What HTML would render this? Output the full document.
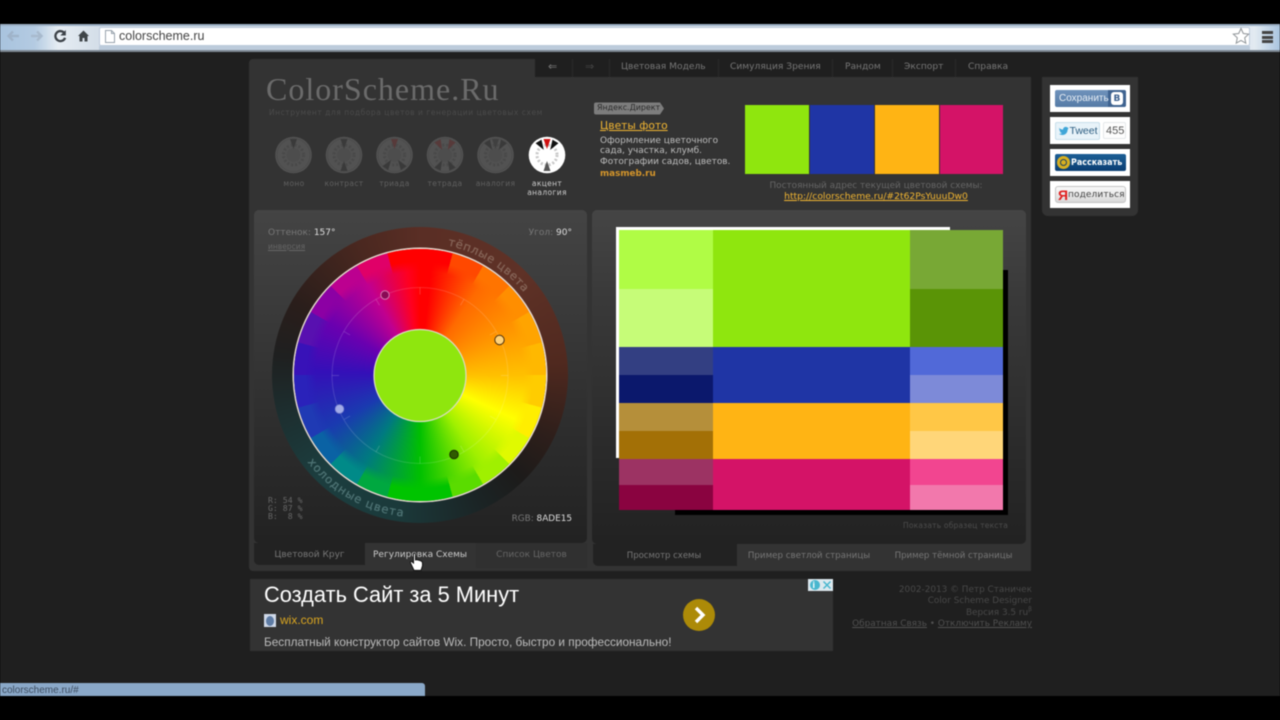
<!DOCTYPE html>
<html lang="ru">
<head>
<meta charset="utf-8">
<title>ColorScheme.Ru</title>
<style>
html,body{margin:0;padding:0;width:1280px;height:720px;overflow:hidden;background:#000}
#root{position:relative;width:1280px;height:720px;overflow:hidden;background:#000;font-family:"DejaVu Sans","Liberation Sans",sans-serif;filter:blur(.4px)}
.a,.t{position:absolute}
.t{white-space:nowrap;line-height:12px}
.c{transform:translateX(-50%);text-align:center}
.r{text-align:right}
.w{border-radius:50%}
</style>
</head>
<body>
<div id="root">
<!-- page bg -->
<div class="a" style="left:0;top:52px;width:1280px;height:644px;background:#1f1f1f"></div>

<!-- browser toolbar -->
<div class="a" style="left:0;top:24px;width:1280px;height:28px;background:linear-gradient(90deg,#a8c3de 0,#b4cbe2 35px,#e6edf3 58px,#d5dfe9 95px,#ccd8e4 400px,#d8e0e8 700px,#cad8e6 1100px,#e2eaf1 1255px,#a9c4df 1280px)"></div>
<div class="a" style="left:0;top:24px;width:1280px;height:2px;background:#9cb0c4"></div>
<div class="a" style="left:0;top:50px;width:1280px;height:2px;background:#7d8893"></div>
<div class="a" style="left:99px;top:27px;width:1151px;height:19px;background:#fff;border:1px solid #bccadb;border-radius:2px;box-sizing:border-box"></div>
<div class="a" style="left:99px;top:46px;width:1151px;height:4px;background:#bccbdb"></div>
<svg class="a" style="left:0;top:24px" width="100" height="28" viewBox="0 24 100 28">
<path d="M19 36H8.500M13 31.500 8.500 36l4.500 4.500" fill="none" stroke="#9fb3c9" stroke-width="2.400"/>
<path d="M31 36h10.500M37 31.500l4.500 4.500-4.500 4.500" fill="none" stroke="#a8bacd" stroke-width="2.400"/>
<path d="M64.500 33.200a5 5 0 1 0 .6 4.600" fill="none" stroke="#3c4248" stroke-width="2.300"/>
<path d="M65.800 30v5.500h-5.500z" fill="#3c4248"/>
<path d="M83.500 30.500 78 36h1.500v5.500h3v-3.500h2v3.500h3V36H89z" fill="#3f4549"/>
</svg>
<svg class="a" style="left:104px;top:29px" width="12" height="15" viewBox="0 0 12 15"><path d="M1.500 1.500h6l3 3v9h-9zM7.500 1.500v3h3" fill="#fff" stroke="#98a2ac"/></svg>
<div class="t" style="left:119px;top:29px;font:12.500px/14px 'Liberation Sans',sans-serif;color:#444">colorscheme.ru</div>
<svg class="a" style="left:1232px;top:27px" width="18" height="18" viewBox="0 0 18 18"><path d="M9 1.500l2.300 5 5.400.6-4 3.700 1.100 5.400L9 13.500l-4.800 2.700 1.100-5.400-4-3.700 5.400-.6z" fill="#fff" stroke="#8f9498"/></svg>
<div class="a" style="left:1262px;top:31px;width:11px;height:3px;background:#444"></div>
<div class="a" style="left:1262px;top:35.500px;width:11px;height:3px;background:#444"></div>
<div class="a" style="left:1262px;top:40px;width:11px;height:3px;background:#444"></div>

<!-- main panel -->
<div class="a" style="left:249px;top:59px;width:286px;height:40px;background:#333;border-radius:4px 0 0 0"></div>
<div class="a" style="left:249px;top:77px;width:782px;height:494px;background:#333;border-radius:0 0 4px 4px"></div>

<!-- nav -->
<div class="t" style="left:548px;top:61px;font-size:11px;color:#777">⇐</div>
<div class="t" style="left:585px;top:61px;font-size:11px;color:#444">⇒</div>
<div class="a" style="left:572px;top:59px;width:1px;height:18px;background:#2a2a2a"></div>
<div class="a" style="left:609px;top:59px;width:1px;height:18px;background:#2a2a2a"></div>
<div class="a" style="left:718px;top:59px;width:1px;height:18px;background:#2a2a2a"></div>
<div class="a" style="left:832px;top:59px;width:1px;height:18px;background:#2a2a2a"></div>
<div class="a" style="left:892px;top:59px;width:1px;height:18px;background:#2a2a2a"></div>
<div class="a" style="left:955px;top:59px;width:1px;height:18px;background:#2a2a2a"></div>
<div class="t" style="left:621px;top:61px;font-size:9.100px;color:#777">Цветовая Модель</div>
<div class="t" style="left:730px;top:61px;font-size:9.100px;color:#777">Симуляция Зрения</div>
<div class="t" style="left:845px;top:61px;font-size:9.100px;color:#777">Рандом</div>
<div class="t" style="left:904px;top:61px;font-size:9.100px;color:#777">Экспорт</div>
<div class="t" style="left:968px;top:61px;font-size:9.100px;color:#777">Справка</div>

<!-- logo -->
<div class="t" style="left:266px;top:70px;font:32px/38px 'Liberation Serif',serif;color:#6b6b6b;letter-spacing:1px">ColorScheme.Ru</div>
<div class="t" style="left:269px;top:107px;font-size:7.500px;color:#4b4b4b;letter-spacing:.55px">Инструмент для подбора цветов и генерации цветовых схем</div>

<!-- scheme type thumbs -->
<svg class="a" style="left:270px;top:132px" width="300" height="46" viewBox="270 132 300 46">
<defs>
<g id="base">
<circle r="18.300" fill="#525252"/>
<circle r="16.500" fill="none" stroke="#4c4c4c" stroke-width="1"/>
<circle r="10" fill="none" stroke="#494949" stroke-width="3" stroke-dasharray="2 2"/>
<circle r="7" fill="#4d4d4d"/>
</g>
<polygon id="wd" points="-3.500,-16 3.500,-16 0,-6"/>
</defs>
<g transform="translate(293.500 155)"><use href="#base"/><use href="#wd" fill="#3a3a3a"/></g>
<g transform="translate(344 155)"><use href="#base"/><use href="#wd" fill="#3a3a3a"/><use href="#wd" fill="#3a3a3a" transform="rotate(180)"/></g>
<g transform="translate(394.500 155)"><use href="#base"/><use href="#wd" fill="#573a3a"/><use href="#wd" fill="#3a3a3a" transform="rotate(145)"/><use href="#wd" fill="#3a3a3a" transform="rotate(215)"/></g>
<g transform="translate(445 155)"><use href="#base"/><use href="#wd" fill="#573a3a" transform="rotate(-28)"/><use href="#wd" fill="#573a3a" transform="rotate(28)"/><use href="#wd" fill="#3a3a3a" transform="rotate(152)"/><use href="#wd" fill="#3a3a3a" transform="rotate(208)"/></g>
<g transform="translate(495.500 155)"><use href="#base"/><use href="#wd" fill="#404040"/><use href="#wd" fill="#3a3a3a" transform="rotate(-32)"/><use href="#wd" fill="#3a3a3a" transform="rotate(32)"/></g>
<g transform="translate(547 155)">
<circle r="18.300" fill="#fff"/>
<circle r="10" fill="none" stroke="#c8c8c8" stroke-width="3" stroke-dasharray="2 2"/>
<use href="#wd" fill="#d01010"/><use href="#wd" fill="#111" transform="rotate(-32)"/><use href="#wd" fill="#111" transform="rotate(32)"/><use href="#wd" fill="#555" transform="rotate(180)"/>
</g>
</svg>
<div class="t c" style="left:294px;top:178px;font-size:7.500px;color:#606060;letter-spacing:.35px">моно</div>
<div class="t c" style="left:344px;top:178px;font-size:7.500px;color:#606060;letter-spacing:.35px">контраст</div>
<div class="t c" style="left:394.500px;top:178px;font-size:7.500px;color:#606060;letter-spacing:.35px">триада</div>
<div class="t c" style="left:445px;top:178px;font-size:7.500px;color:#606060;letter-spacing:.35px">тетрада</div>
<div class="t c" style="left:495.500px;top:178px;font-size:7.500px;color:#606060;letter-spacing:.35px">аналогия</div>
<div class="t c" style="left:547px;top:179px;font-size:7.500px;color:#ccc;letter-spacing:.35px;line-height:9px">акцент<br>аналогия</div>

<!-- direct ad -->
<svg class="a" style="left:594px;top:102px" width="72" height="13" viewBox="0 0 72 13"><path d="M2 .5h64l4 6-4 6H2q-2 0-2-2V2.500q0-2 2-2z" fill="#7d7d7d"/></svg>
<div class="t" style="left:597px;top:102px;font-size:7.900px;color:#2a2a2a">Яндекс.Директ</div>
<div class="t" style="left:600px;top:120px;font-size:10.700px;color:#f2b632;text-decoration:underline">Цветы фото</div>
<div class="t" style="left:600px;top:136px;font-size:8.950px;color:#bdbdbd;line-height:10.400px">Оформление цветочного<br>сада, участка, клумб.<br>Фотографии садов, цветов.</div>
<div class="t" style="left:600px;top:168px;font-size:8.800px;font-weight:bold;color:#d6962a">masmeb.ru</div>

<!-- swatches -->
<div class="a" style="left:745px;top:105px;width:64px;height:69px;background:#8fe60e"></div>
<div class="a" style="left:810px;top:105px;width:64px;height:69px;background:#1f35a5"></div>
<div class="a" style="left:875px;top:105px;width:64px;height:69px;background:#ffb414"></div>
<div class="a" style="left:940px;top:105px;width:63px;height:69px;background:#d41367"></div>
<div class="t c" style="left:876px;top:180px;font-size:8.900px;color:#666">Постоянный адрес текущей цветовой схемы:</div>
<div class="t c" style="left:876px;top:190.500px;font-size:9.200px;color:#f2b632;text-decoration:underline">http://colorscheme.ru/#2t62PsYuuuDw0</div>

<!-- left panel -->
<div class="a" style="left:254px;top:210px;width:333px;height:333px;border-radius:5px;background:linear-gradient(180deg,#444 0,#3c3c3c 25%,#2c2c2c 70%,#222 100%)"></div>
<div class="a" style="left:254px;top:543px;width:111px;height:22px;background:#222;border-radius:0 0 0 5px"></div>
<div class="a" style="left:365px;top:543px;width:110px;height:25px;background:#333"></div>
<div class="a" style="left:476px;top:543px;width:111px;height:25px;background:#303030"></div>
<div class="t c" style="left:309.500px;top:549px;font-size:9px;color:#777">Цветовой Круг</div>
<div class="t c" style="left:420px;top:549px;font-size:9px;color:#ccc">Регулировка Схемы</div>
<div class="t c" style="left:531.500px;top:549px;font-size:9px;color:#666">Список Цветов</div>

<div class="t" style="left:268px;top:226.500px;font-size:9px;color:#777">Оттенок: <span style="color:#ddd">157°</span></div>
<div class="t" style="left:268px;top:241px;font-size:7.500px;color:#666;text-decoration:underline">инверсия</div>
<div class="t r" style="right:708px;top:226.500px;font-size:9px;color:#777">Угол: <span style="color:#ddd">90°</span></div>

<!-- wheel -->
<div class="a w" style="left:272px;top:227px;width:296px;height:296px;background:conic-gradient(#5a2e25 0deg,#5f3227 45deg,#50291f 85deg,#2e1f1b 115deg,#1d1b1a 135deg,#1b2425 155deg,#1b3a3b 190deg,#1c3e3f 225deg,#1d2e2f 255deg,#1f2020 278deg,#2a1e1b 300deg,#4a2820 335deg,#5a2e25 360deg)"></div>
<div class="a w" style="left:294px;top:249px;width:252px;height:252px;box-shadow:0 0 0 1.500px #e9dcd2;background:conic-gradient(#ff0000 0 15deg,#ff4800 15deg 30deg,#ff7400 30deg 45deg,#ff8e00 45deg 60deg,#ffa400 60deg 75deg,#ffb800 75deg 90deg,#ffcc00 90deg 105deg,#ffee00 105deg 120deg,#e0fa00 120deg 135deg,#a0f000 135deg 150deg,#5adc00 150deg 165deg,#00c400 165deg 195deg,#00a840 195deg 210deg,#008a88 210deg 225deg,#0a62a4 225deg 240deg,#1f3ab4 240deg 255deg,#2a22ba 255deg 270deg,#3812b8 270deg 285deg,#5810b0 285deg 300deg,#8c00a4 300deg 315deg,#bc0090 315deg 330deg,#e00068 330deg 345deg,#ff0000 345deg 360deg)"></div>
<div class="a w" style="left:294px;top:249px;width:252px;height:252px;-webkit-mask:radial-gradient(circle,#000 104px,transparent 114px);mask:radial-gradient(circle,#000 104px,transparent 114px);background:conic-gradient(#ff0000 0deg,#ff0000 6deg,#ff6a00 34deg,#ff9000 60deg,#ffc000 90deg,#ffff00 115deg,#a0f000 145deg,#00c000 180deg,#007a80 212deg,#1a3ab0 240deg,#3410b8 272deg,#6a00b0 300deg,#c00090 330deg,#ff0020 353deg,#ff0000 360deg)"></div>
<svg class="a" style="left:270px;top:225px" width="300" height="300" viewBox="270 225 300 300">
<circle cx="420" cy="375.500" r="88" fill="none" stroke="rgba(255,255,255,.14)"/>
<g stroke="rgba(255,255,255,.16)" stroke-width="1">
<path d="M332 375.500h7M501 375.500h7M420 287.500v7M420 456.500v7"/>
<path d="M344 331.500l6 3.500M496 331.500l-6 3.500M344 419.500l6-3.500M496 419.500l-6-3.500"/>
<path d="M376 299.300l3.500 6M464 299.300l-3.500 6M376 451.700l3.500-6M464 451.700l-3.500-6"/>
</g>
<path id="warm" d="M420 242.500A133 133 0 0 1 553 375.500" fill="none"/>
<path id="cold" d="M278 375.500A142 142 0 0 0 420 517.500A142 142 0 0 0 500 492" fill="none"/>
<text font-family="DejaVu Sans,sans-serif" font-size="11.500" fill="#866558" stroke="#866558" stroke-width=".25"><textPath href="#warm" startOffset="28" textLength="91">тёплые цвета</textPath></text>
<text font-family="DejaVu Sans,sans-serif" font-size="11.500" fill="#4f7475" stroke="#4f7475" stroke-width=".25"><textPath href="#cold" startOffset="93" textLength="113">холодные цвета</textPath></text>
<circle cx="420" cy="375.500" r="46" fill="#8fe60e" stroke="#dcdcc8" stroke-width="1.200"/>
<circle cx="385" cy="295" r="4.200" fill="#8a0a55" stroke="#d87ab0" stroke-width="1"/>
<circle cx="499.500" cy="340" r="4.700" fill="#ffd27a" stroke="#4a3010" stroke-width="1"/>
<circle cx="339.500" cy="409" r="4.300" fill="#a3ace8" stroke="#7c86d0" stroke-width=".8"/>
<circle cx="454" cy="454.500" r="4.300" fill="#2f5c00" stroke="#1a3000" stroke-width="1"/>
</svg>
<div class="t" style="left:268px;top:496px;font:8.200px/8px 'DejaVu Sans Mono','Liberation Mono',monospace;color:#666;white-space:pre">R: 54 %
G: 87 %
B:  8 %</div>
<div class="t r" style="right:708px;top:513px;font-size:8.900px;color:#777">RGB: <span style="color:#ddd">8ADE15</span></div>

<!-- right panel -->
<div class="a" style="left:592px;top:210px;width:434px;height:334px;border-radius:5px;background:linear-gradient(180deg,#454545 0,#3a3a3a 25%,#2b2b2b 70%,#222 100%)"></div>
<div class="a" style="left:593px;top:544px;width:144px;height:22px;background:#222;border-radius:0 0 0 5px"></div>
<div class="a" style="left:737px;top:544px;width:144px;height:27px;background:#333"></div>
<div class="a" style="left:882px;top:544px;width:149px;height:27px;background:#333"></div>
<div class="t c" style="left:664px;top:550px;font-size:8.500px;color:#777">Просмотр схемы</div>
<div class="t c" style="left:809px;top:549.500px;font-size:8.700px;color:#777">Пример светлой страницы</div>
<div class="t c" style="left:953.500px;top:549.500px;font-size:8.600px;color:#777">Пример тёмной страницы</div>
<div class="t r" style="right:272px;top:520px;font-size:7.500px;color:#4d4d4d;letter-spacing:.2px">Показать образец текста</div>

<!-- preview -->
<div class="a" style="left:616px;top:227px;width:334px;height:231px;background:#fff"></div>
<div class="a" style="left:675px;top:270px;width:333px;height:245px;background:#000"></div>
<div class="a" style="left:619px;top:230px;width:94px;height:59px;background:#b0fc45"></div>
<div class="a" style="left:619px;top:289px;width:94px;height:58px;background:#c6fc78"></div>
<div class="a" style="left:713px;top:230px;width:197px;height:117px;background:#8fe60e"></div>
<div class="a" style="left:910px;top:230px;width:93px;height:59px;background:#78a835"></div>
<div class="a" style="left:910px;top:289px;width:93px;height:58px;background:#5a9406"></div>
<div class="a" style="left:619px;top:347px;width:94px;height:28px;background:#333f82"></div>
<div class="a" style="left:619px;top:375px;width:94px;height:28px;background:#0b186c"></div>
<div class="a" style="left:713px;top:347px;width:197px;height:56px;background:#1f35a5"></div>
<div class="a" style="left:910px;top:347px;width:93px;height:28px;background:#5169d8"></div>
<div class="a" style="left:910px;top:375px;width:93px;height:28px;background:#7d8ad8"></div>
<div class="a" style="left:619px;top:403px;width:94px;height:28px;background:#b58f3a"></div>
<div class="a" style="left:619px;top:431px;width:94px;height:28px;background:#a37006"></div>
<div class="a" style="left:713px;top:403px;width:197px;height:56px;background:#ffb414"></div>
<div class="a" style="left:910px;top:403px;width:93px;height:28px;background:#ffc746"></div>
<div class="a" style="left:910px;top:431px;width:93px;height:28px;background:#ffd679"></div>
<div class="a" style="left:619px;top:459px;width:94px;height:26px;background:#9c3363"></div>
<div class="a" style="left:619px;top:485px;width:94px;height:25px;background:#8a0340"></div>
<div class="a" style="left:713px;top:459px;width:197px;height:51px;background:#d41367"></div>
<div class="a" style="left:910px;top:459px;width:93px;height:26px;background:#f24590"></div>
<div class="a" style="left:910px;top:485px;width:93px;height:25px;background:#f278ac"></div>

<!-- side panel -->
<div class="a" style="left:1042px;top:77px;width:96px;height:139px;background:#333;border-radius:0 0 6px 6px"></div>
<div class="a" style="left:1050px;top:85px;width:80px;height:27px;background:#fff"></div>
<div class="a" style="left:1050px;top:117px;width:80px;height:27px;background:#fff"></div>
<div class="a" style="left:1050px;top:149px;width:80px;height:27px;background:#fff"></div>
<div class="a" style="left:1050px;top:181px;width:80px;height:27px;background:#fff"></div>
<!-- vk -->
<div class="a" style="left:1055px;top:90px;width:71px;height:17px;background:linear-gradient(#6f92bb,#557ba6);border-radius:2px"></div>
<div class="a" style="left:1108px;top:90px;width:18px;height:17px;background:#3f6390;border-radius:0 2px 2px 0"></div>
<div class="a" style="left:1111px;top:92px;width:12px;height:13px;background:#fff;border-radius:3px"></div>
<div class="t" style="left:1059px;top:92.500px;font:10px/12px 'Liberation Sans',sans-serif;color:#e8eef5">Сохранить</div>
<div class="t" style="left:1113.500px;top:92.500px;font-size:9px;font-weight:bold;color:#3f6390">В</div>
<!-- tweet -->
<div class="a" style="left:1055px;top:122px;width:43px;height:16px;background:#e8f3f9;border:1px solid #c8dfea;border-radius:2px"></div>
<svg class="a" style="left:1058px;top:125px" width="11" height="11" viewBox="0 0 12 12"><path d="M1 3c1.500 1.500 3 2 4.500 2 0-2 1.500-3 3-3 .8 0 1.200.3 1.700.7L11.500 3l-.8 1 .8-.1-1 1c0 3-2 6-5.500 6-1.500 0-3-.5-4-1.200 1.500 0 2.500-.4 3.300-1C3 8.500 2.200 8 2 7h1C2 6.500 1.300 5.500 1.300 4.500l1 .3C1.500 4.300 1 3.500 1 3z" fill="#3fa6d8"/></svg>
<div class="t" style="left:1069.500px;top:124.500px;font:10.500px/12px 'Liberation Sans',sans-serif;color:#2b5c80">Tweet</div>
<div class="a" style="left:1103px;top:122px;width:23px;height:17px;background:#fdfdfd;border:1px solid #e4e8ea;box-sizing:border-box;border-radius:2px"></div>
<div class="t" style="left:1106px;top:124.500px;font:11px/12px 'Liberation Sans',sans-serif;color:#555">455</div>
<!-- mail -->
<div class="a" style="left:1055px;top:154px;width:71px;height:17px;background:linear-gradient(#1c5e96,#0b3e72);border-radius:2px"></div>
<div class="a w" style="left:1057px;top:155.500px;width:13px;height:13px;background:#d8b020"></div>
<div class="a w" style="left:1060px;top:158.500px;width:5px;height:5px;border:1px solid #1c4060"></div>
<div class="t" style="left:1071px;top:156.500px;font-size:8.500px;font-weight:bold;color:#fff;transform-origin:0 50%;transform:scaleX(.94)">Рассказать</div>
<!-- yandex -->
<div class="a" style="left:1055px;top:186px;width:71px;height:17px;background:linear-gradient(#fafafa,#d8d8d8);border:1px solid #c4c4c4;box-sizing:border-box;border-radius:3px"></div>
<div class="t" style="left:1058px;top:187px;font:bold 14px/16px 'Liberation Sans',sans-serif;color:#e02020">Я</div>
<div class="t" style="left:1068px;top:188.500px;font-size:9px;letter-spacing:.1px;color:#444">поделиться</div>

<!-- bottom ad -->
<div class="a" style="left:250px;top:579px;width:583px;height:72px;background:#333"></div>
<div class="t" style="left:264px;top:582px;font:22px/26px 'Liberation Sans',sans-serif;color:#fff;transform-origin:0 50%;transform:scaleX(.992)">Создать Сайт за 5 Минут</div>
<div class="a" style="left:264px;top:614px;width:12px;height:13px;background:#cfd8e8"></div>
<div class="a w" style="left:266px;top:615.500px;width:8px;height:10px;background:#5d7ba4"></div>
<div class="t" style="left:280px;top:613px;font:12px/15px 'Liberation Sans',sans-serif;color:#d9a520">wix.com</div>
<div class="t" style="left:264px;top:635px;font:12px/15px 'Liberation Sans',sans-serif;color:#bbb;transform-origin:0 50%;transform:scaleX(.983)">Бесплатный конструктор сайтов Wix. Просто, быстро и профессионально!</div>
<div class="a w" style="left:683px;top:599px;width:32px;height:32px;background:#ac8a08"></div>
<svg class="a" style="left:683px;top:599px" width="32" height="32" viewBox="0 0 32 32"><path d="M13 9l7 7-7 7" fill="none" stroke="#fff" stroke-width="3.400"/></svg>
<div class="a" style="left:808px;top:579px;width:25px;height:12px;background:#dce8ee"></div>
<div class="a w" style="left:809.500px;top:580px;width:10px;height:10px;background:#49b7cf"></div>
<div class="t" style="left:812.500px;top:579px;font:bold 9px/12px 'Liberation Sans',sans-serif;color:#fff">i</div>
<svg class="a" style="left:822px;top:580px" width="10" height="10" viewBox="0 0 10 10"><path d="M1.500 1.500l7 7M8.500 1.500l-7 7" stroke="#49b7cf" stroke-width="1.500"/></svg>

<!-- footer text -->
<div class="t r" style="right:248px;top:583.500px;font-size:8.900px;color:#484848">2002-2013 © Петр Станичек</div>
<div class="t r" style="right:248px;top:594.500px;font-size:8.900px;color:#484848">Color Scheme Designer</div>
<div class="t r" style="right:248px;top:606.500px;font-size:8.900px;color:#484848">Версия 3.5 ru<sup style="font-size:6px;line-height:0">β</sup></div>
<div class="t r" style="right:248px;top:618px;font-size:8.900px;color:#505050"><u>Обратная Связь</u> • <u>Отключить Рекламу</u></div>

<!-- status bubble -->
<div class="a" style="left:0;top:683px;width:425px;height:13px;background:#8aa8c8;border-radius:0 3px 0 0"></div>
<div class="t" style="left:2px;top:685px;font:10px/12px 'Liberation Sans',sans-serif;color:#3d4d60">colorscheme.ru/#</div>

<!-- cursor -->
<svg class="a" style="left:409px;top:552px" width="16" height="19" viewBox="0 0 16 19"><path d="M4.500 1.500c1-.8 2 0 2 1V8l1-.3 1 .2 1 .2 1 .3 1.500.5c1 .5 1.500 1 1.500 2v3l-1.500 4.500H5L1.500 11c-.5-1 .3-2 1.500-1.300l1.500 1.300z" fill="#fff" stroke="#111" stroke-width="1"/></svg>
</div>
</body>
</html>
